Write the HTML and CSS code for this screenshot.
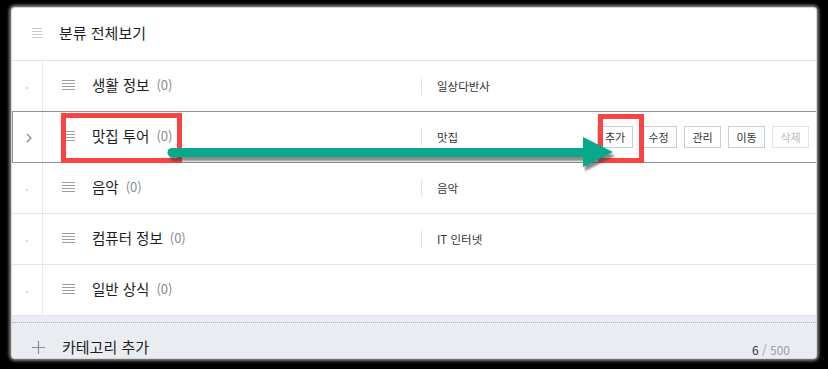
FILE: index.html
```html
<!DOCTYPE html>
<html lang="ko">
<head>
<meta charset="utf-8">
<link rel="stylesheet" href="styles.css">
</head>
<body>
<div class="panel">
  <div class="head">
    <span class="burger burger-light"><i></i><i></i><i></i><i></i></span>
    <span class="head-title">분류 전체보기</span>
  </div>

  <div class="row">
    <div class="side"><span class="dot"></span></div>
    <div class="main">
      <span class="burger"><i></i><i></i><i></i><i></i></span>
      <span class="name">생활 정보</span><span class="count">(0)</span>
    </div>
    <div class="desc">일상다반사</div>
  </div>

  <div class="row row-active">
    <div class="side">
      <svg class="chev" width="6" height="10" viewBox="0 0 6 10"><path d="M1 1 L5 5 L1 9" fill="none" stroke="#7c8088" stroke-width="1.1"/></svg>
    </div>
    <div class="main">
      <span class="burger"><i></i><i></i><i></i><i></i></span>
      <span class="name">맛집 투어</span><span class="count">(0)</span>
    </div>
    <div class="desc">맛집</div>
    <div class="actions">
      <button class="btn">추가</button>
      <button class="btn">수정</button>
      <button class="btn">관리</button>
      <button class="btn">이동</button>
      <button class="btn btn-off">삭제</button>
    </div>
  </div>

  <div class="row">
    <div class="side"><span class="dot"></span></div>
    <div class="main">
      <span class="burger"><i></i><i></i><i></i><i></i></span>
      <span class="name">음악</span><span class="count">(0)</span>
    </div>
    <div class="desc">음악</div>
  </div>

  <div class="row">
    <div class="side"><span class="dot"></span></div>
    <div class="main">
      <span class="burger"><i></i><i></i><i></i><i></i></span>
      <span class="name">컴퓨터 정보</span><span class="count">(0)</span>
    </div>
    <div class="desc">IT 인터넷</div>
  </div>

  <div class="row">
    <div class="side"><span class="dot"></span></div>
    <div class="main">
      <span class="burger"><i></i><i></i><i></i><i></i></span>
      <span class="name">일반 상식</span><span class="count">(0)</span>
    </div>
    <div class="desc desc-empty"></div>
  </div>

  <div class="foot">
    <div class="foot-inner">
      <svg class="plus" width="13" height="13" viewBox="0 0 13 13"><path d="M6.5 0 V13 M0 6.5 H13" stroke="#8a8f97" stroke-width="1.2"/></svg>
      <span class="foot-title">카테고리 추가</span>
      <span class="quota"><b>6</b> / 500</span>
    </div>
  </div>
</div>

<div class="mark mark-name"></div>
<div class="mark mark-add"></div>
<svg class="arrow" width="828" height="369" viewBox="0 0 828 369">
  <defs>
    <filter id="blur" x="-10%" y="-50%" width="120%" height="200%"><feGaussianBlur stdDeviation="1.3"/></filter>
  </defs>
  <g transform="translate(2,4)" opacity="0.6" filter="url(#blur)">
    <line x1="172" y1="152.5" x2="588" y2="152.5" stroke="#3a3a3a" stroke-width="9" stroke-linecap="round"/>
    <polygon points="583,137 613,152 583,167" fill="#3a3a3a"/>
  </g>
  <line x1="172" y1="152.5" x2="588" y2="152.5" stroke="#08a98a" stroke-width="9" stroke-linecap="round"/>
  <polygon points="583,137 613,152 583,167" fill="#08a98a"/>
</svg>
</body>
</html>
```

FILE: styles.css
```css
html, body {
  margin: 0;
  padding: 0;
}
body {
  width: 828px;
  height: 369px;
  background: #000;
  overflow: hidden;
  font-family: "Noto Sans CJK KR", "Noto Sans", sans-serif;
  color: #222;
}
.panel {
  position: relative;
  margin: 8px 0 0 12px;
  width: 804px;
  height: 350px;
  background: #fff;
  border-radius: 3px;
  box-shadow: 0 0 0 1px #d8d8d8, 0 0 3px 3px rgba(170, 170, 170, 0.75);
  overflow: hidden;
}
.head {
  height: 53px;
  box-sizing: border-box;
  padding-bottom: 2px;
  border-bottom: 1px solid #e1e4ea;
  display: flex;
  align-items: center;
  padding-left: 20px;
}
.head-title {
  margin-left: 17px;
  font-size: 15px;
  line-height: 20px;
  color: #1e1e1e;
}
.burger {
  display: inline-flex;
  flex-direction: column;
  justify-content: space-between;
  width: 13px;
  height: 10px;
}
.burger i {
  display: block;
  height: 1px;
  background: #9a9ea5;
}
.burger-light {
  width: 10px;
}
.burger-light i {
  background: #c9cbd0;
}
.row {
  display: flex;
  align-items: stretch;
  height: 50px;
  border-bottom: 1px solid #e1e4ea;
}
.row-active {
  margin-top: -1px;
  border: 1px solid #8d929a;
  border-right: none;
  position: relative;
}
.row-active .side {
  width: 29px;
}
.side {
  width: 30px;
  border-right: 1px solid #e8eaef;
  display: flex;
  align-items: center;
  justify-content: center;
}
.dot {
  width: 2px;
  height: 2px;
  border-radius: 1px;
  background: #c9ccd1;
  margin-top: 3px;
}
.chev {
  margin-left: 2px;
  margin-top: 1px;
}
.main {
  width: 359px;
  display: flex;
  align-items: center;
  padding-left: 19px;
  padding-bottom: 3px;
  box-sizing: content-box;
}
.main .burger {
  margin-top: 1px;
}
.name {
  margin-left: 17px;
  font-size: 14.5px;
  line-height: 20px;
  color: #1e1e1e;
}
.count {
  margin-left: 7px;
  font-size: 13px;
  line-height: 20px;
  color: #868a91;
}
.desc {
  align-self: center;
  border-left: 1px solid #e1e4ea;
  height: 18px;
  line-height: 18px;
  padding-left: 15px;
  font-size: 11.5px;
  color: #333;
  flex: 1;
}
.desc-empty {
  border-left-color: transparent;
}
.actions {
  display: flex;
  align-items: center;
  gap: 7px;
  padding-right: 7px;
}
.btn {
  width: 37px;
  height: 22px;
  padding: 0;
  border: 1px solid #c9cdd4;
  background: #fff;
  font-family: "Noto Sans CJK KR", "Noto Sans", sans-serif;
  font-size: 11px;
  line-height: 20px;
  color: #333;
  border-radius: 0;
}
.btn:first-child {
  width: 36px;
}
.btn-off {
  color: #b8bbc0;
  border-color: #e0e3e8;
}
.foot {
  height: 42px;
  background: #e9edf2;
  padding-top: 6px;
  box-sizing: border-box;
}
.foot-inner {
  border-top: 1px dotted #aeb3bb;
  height: 36px;
  box-sizing: border-box;
  display: flex;
  align-items: flex-start;
  padding-top: 14px;
  padding-left: 20px;
  padding-right: 26px;
}
.plus {
  margin-top: 4px;
}
.foot-title {
  margin-left: 17px;
  font-size: 15px;
  line-height: 20px;
  color: #1e1e1e;
}
.quota {
  margin-left: auto;
  margin-top: 4px;
  font-size: 12px;
  line-height: 18px;
  color: #9a9ea5;
}
.quota b {
  font-weight: normal;
  color: #333;
}
.mark {
  position: absolute;
  border: 5px solid #fb4343;
  box-sizing: border-box;
}
.mark-name {
  left: 61px;
  top: 113px;
  width: 121px;
  height: 50px;
}
.mark-add {
  left: 598px;
  top: 114px;
  width: 46px;
  height: 49px;
}
.arrow {
  position: absolute;
  left: 0;
  top: 0;
  pointer-events: none;
}
```
